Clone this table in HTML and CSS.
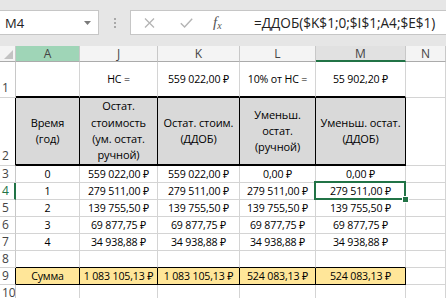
FILE: index.html
```html
<!DOCTYPE html>
<html lang="ru">
<head>
<meta charset="utf-8">
<link rel="stylesheet" href="styles.css">
</head>
<body>
<div class="fbar">
  <div class="namebox"><span>M4</span><svg class="arrow" width="7" height="4" viewBox="0 0 7 4"><path d="M0 0h7L3.5 4z" fill="#7a7a7a"/></svg></div>
  <div class="dots"><i></i><i></i><i></i></div>
  <div class="fbox">
    <svg class="ico-x" width="11" height="10" viewBox="0 0 11 10"><path d="M1 0.5L10 9.5M10 0.5L1 9.5" stroke="#b4b4b4" stroke-width="1.3" fill="none"/></svg>
    <svg class="ico-ok" width="13" height="10" viewBox="0 0 13 10"><path d="M0.8 5.2L4.6 9L12.2 0.8" stroke="#b4b4b4" stroke-width="1.4" fill="none"/></svg>
    <span class="fx">f<sub>x</sub></span>
    <span class="formula">=ДДОБ($K$1;0;$I$1;A4;$E$1)</span>
  </div>
</div>
<div class="grid">
  <div class="ch corner"><span class="tri"></span></div>
  <div class="ch ch-sel">A</div>
  <div class="ch">J</div>
  <div class="ch">K</div>
  <div class="ch">L</div>
  <div class="ch ch-act">M</div>
  <div class="ch">N</div>

  <div class="rh rh-tall">1</div>
  <div class="c r1"></div>
  <div class="c r1">НС =</div>
  <div class="c r1">559 022,00 ₽</div>
  <div class="c r1">10% от НС =</div>
  <div class="c r1">55 902,20 ₽</div>
  <div class="c"></div>

  <div class="rh rh-tall rh-hd">2</div>
  <div class="c hd">Время<br>(год)</div>
  <div class="c hd">Остат.<br>стоимость<br>(ум. остат.<br>ручной)</div>
  <div class="c hd">Остат. стоим.<br>(ДДОБ)</div>
  <div class="c hd">Уменьш.<br>остат.<br>(ручной)</div>
  <div class="c hd">Уменьш. остат.<br>(ДДОБ)</div>
  <div class="c"></div>

  <div class="rh">3</div>
  <div class="c">0</div>
  <div class="c">559 022,00 ₽</div>
  <div class="c">559 022,00 ₽</div>
  <div class="c">0,00 ₽</div>
  <div class="c">0,00 ₽</div>
  <div class="c"></div>

  <div class="rh rh-act">4</div>
  <div class="c">1</div>
  <div class="c">279 511,00 ₽</div>
  <div class="c">279 511,00 ₽</div>
  <div class="c">279 511,00 ₽</div>
  <div class="c sel">279 511,00 ₽<span class="handle"></span></div>
  <div class="c"></div>

  <div class="rh">5</div>
  <div class="c">2</div>
  <div class="c">139 755,50 ₽</div>
  <div class="c">139 755,50 ₽</div>
  <div class="c">139 755,50 ₽</div>
  <div class="c">139 755,50 ₽</div>
  <div class="c"></div>

  <div class="rh">6</div>
  <div class="c">3</div>
  <div class="c">69 877,75 ₽</div>
  <div class="c">69 877,75 ₽</div>
  <div class="c">69 877,75 ₽</div>
  <div class="c">69 877,75 ₽</div>
  <div class="c"></div>

  <div class="rh">7</div>
  <div class="c">4</div>
  <div class="c">34 938,88 ₽</div>
  <div class="c">34 938,88 ₽</div>
  <div class="c">34 938,88 ₽</div>
  <div class="c">34 938,88 ₽</div>
  <div class="c"></div>

  <div class="rh">8</div>
  <div class="c r8"></div>
  <div class="c r8"></div>
  <div class="c r8"></div>
  <div class="c r8"></div>
  <div class="c r8"></div>
  <div class="c"></div>

  <div class="rh rh-sum">9</div>
  <div class="c sum">Сумма</div>
  <div class="c sum">1 083 105,13 ₽</div>
  <div class="c sum">1 083 105,13 ₽</div>
  <div class="c sum">524 083,13 ₽</div>
  <div class="c sum">524 083,13 ₽</div>
  <div class="c"></div>

  <div class="rh">10</div>
  <div class="c"></div>
  <div class="c"></div>
  <div class="c"></div>
  <div class="c"></div>
  <div class="c"></div>
  <div class="c"></div>
</div>
</body>
</html>
```
FILE: styles.css
```css
html, body {
  margin: 0;
  padding: 0;
}
body {
  width: 446px;
  height: 298px;
  overflow: hidden;
  background: #ffffff;
  font-family: "Open Sans", "Noto Sans", sans-serif;
  color: #000;
}

/* formula bar */
.fbar {
  height: 46px;
  box-sizing: border-box;
  padding-top: 10px;
  background: #e6e6e6;
  display: flex;
  align-items: flex-start;
}
.namebox {
  width: 99px;
  height: 25px;
  box-sizing: border-box;
  background: #fff;
  border: 1px solid #c6c6c6;
  border-left: none;
  display: flex;
  align-items: center;
  justify-content: space-between;
  padding: 0 7px 0 5px;
  font-size: 13px;
  color: #222;
}
.dots {
  width: 31px;
  height: 25px;
  display: flex;
  flex-direction: column;
  align-items: center;
  justify-content: center;
  gap: 2px;
}
.dots i {
  display: block;
  width: 2px;
  height: 2px;
  background: #a8a8a8;
}
.fbox {
  flex: 1;
  height: 25px;
  box-sizing: border-box;
  background: #fff;
  border: 1px solid #c6c6c6;
  border-right: none;
  display: flex;
  align-items: center;
  padding-left: 13px;
}
.ico-x { margin-right: 25px; }
.ico-ok { margin-right: 20px; }
.fx {
  font-family: "Liberation Serif", serif;
  font-style: italic;
  font-size: 15px;
  color: #555;
  width: 12px;
  margin-right: 29px;
}
.fx sub { font-size: 10px; vertical-align: -2px; }
.formula {
  font-size: 13.6px;
  color: #222;
  white-space: nowrap;
}

/* grid */
.grid {
  display: grid;
  grid-template-columns: 16px 64px 78px 82px 76px 90px 40px;
  grid-template-rows: 16px 36px 68px repeat(8, 17px);
  font-size: 10.6px;
  letter-spacing: -0.15px;
}
.grid > div {
  box-sizing: border-box;
  border-right: 1px solid #d4d4d4;
  border-bottom: 1px solid #d4d4d4;
  white-space: nowrap;
}
.ch {
  background: #f4f4f4;
  color: #444;
  font-size: 12px;
  letter-spacing: 0;
  display: flex;
  align-items: center;
  justify-content: center;
  border-right-color: #c8c8c8 !important;
  border-bottom-color: #ababab !important;
}
.corner {
  position: relative;
  background: #f4f4f4;
}
.tri {
  position: absolute;
  right: 2px;
  bottom: 2px;
  width: 0;
  height: 0;
  border-left: 9px solid transparent;
  border-bottom: 9px solid #c3c3c3;
}
.ch-sel {
  background: #9fd5b7;
}
.ch-act {
  background: #e1e1e1;
  border-bottom: 2px solid #217346 !important;
}
.rh {
  background: #fff;
  color: #444;
  font-size: 12px;
  letter-spacing: 0;
  display: flex;
  align-items: center;
  padding-left: 2px;
  border-right-color: #c8c8c8 !important;
  line-height: 1;
  overflow: hidden;
}
.rh-tall {
  align-items: flex-end;
  padding-bottom: 3px;
}
.rh-hd { border-right-color: #000 !important; }
.rh-sum { border-right-color: #000 !important; }
.rh-act {
  color: #217346;
  border-right: 2px solid #217346 !important;
}
.c {
  display: flex;
  align-items: center;
  justify-content: center;
  text-align: center;
}
.r1 {
  border-bottom: 2px solid #000 !important;
}
.hd {
  background: #d9d9d9;
  border-right-color: #000 !important;
  border-bottom: 2px solid #000 !important;
  line-height: 16.3px;
  font-size: 11px;
  letter-spacing: -0.1px;
}
.r8 {
  border-bottom-color: #000 !important;
}
.sum {
  background: #ffe699;
  border-right-color: #000 !important;
  border-bottom-color: #000 !important;
}
.sel {
  position: relative;
}
.sel::after {
  content: "";
  position: absolute;
  left: -2px;
  top: -2px;
  right: -1px;
  bottom: -1px;
  border: 2px solid #217346;
}
.handle {
  position: absolute;
  right: -4px;
  bottom: -4px;
  width: 5px;
  height: 5px;
  background: #217346;
  border: 1px solid #fff;
  z-index: 2;
}
```
